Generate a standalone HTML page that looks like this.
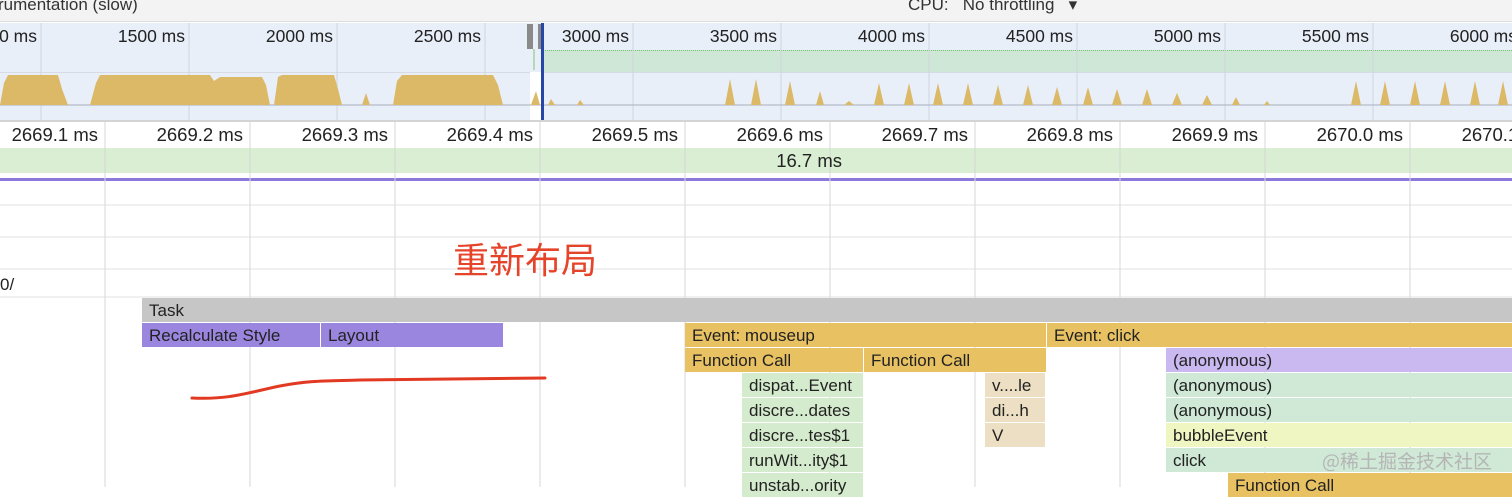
<!DOCTYPE html>
<html><head><meta charset="utf-8"><style>
*{margin:0;padding:0;box-sizing:border-box}
body{width:1512px;height:487px;overflow:hidden;background:#fff;font-family:"Liberation Sans","Noto Sans CJK SC",sans-serif;position:relative;color:#222}
.a{position:absolute}
.lbl{font-size:16px;color:#222;white-space:nowrap}
.bar{position:absolute;height:24px;font-size:17px;line-height:26px;padding-left:7px;white-space:nowrap;overflow:hidden;color:#222}
</style></head><body>
<div class="a" style="left:0;top:0;width:1512px;height:22px;background:#f3f3f3;border-bottom:1px solid #ddd"></div>
<div class="a lbl" style="left:-2px;top:-5px;color:#333;font-size:17px">rumentation (slow)</div>
<div class="a lbl" style="left:908px;top:-5px;color:#333;font-size:17px">CPU: &nbsp;&nbsp;No throttling &nbsp;&nbsp;▾</div>
<div class="a" style="left:0;top:23px;width:1512px;height:97px;background:#e9eff9"></div>
<div class="a" style="left:543px;top:50px;width:969px;height:22px;background:#cfe7d6;border-top:1px dotted #6cbf6c"></div>
<div class="a" style="left:0;top:72px;width:1512px;height:1px;background:#d6dbe4"></div>
<div class="a" style="left:530px;top:72px;width:13px;height:48px;background:#fff"></div>
<svg class="a" style="left:0;top:23px" width="1512" height="97">
<g stroke="#d0d6e0" stroke-width="1">
<line x1="41" y1="0" x2="41" y2="97"/><line x1="189" y1="0" x2="189" y2="97"/><line x1="337" y1="0" x2="337" y2="97"/><line x1="485" y1="0" x2="485" y2="97"/><line x1="633" y1="0" x2="633" y2="97"/><line x1="781" y1="0" x2="781" y2="97"/><line x1="929" y1="0" x2="929" y2="97"/><line x1="1077" y1="0" x2="1077" y2="97"/><line x1="1225" y1="0" x2="1225" y2="97"/><line x1="1373" y1="0" x2="1373" y2="97"/></g>
<line x1="0" y1="82" x2="1512" y2="82" stroke="#a9afbb"/>
<g fill="#dbb967">
<path d="M0 82 L4 60 L8 52 L58 52 L62 66 L68 82Z"/>
<path d="M90 82 L96 60 L100 52 L210 52 L214 58 L220 54 L262 54 L266 62 L270 82Z"/>
<path d="M274 82 L278 54 L282 52 L334 52 L338 66 L342 82Z"/>
<path d="M362 82 L366 70 L370 82Z"/>
<path d="M393 82 L397 58 L402 52 L493 52 L498 62 L503 82Z"/>
<path d="M531 82 L536 68 L540 82Z"/>
<path d="M548 82 L551 76 L555 82Z M577 82 L580 77 L584 82Z"/>
</g>
<g fill="#dbb967">
<path d="M725 82 L730 56 L735 82Z M751 82 L756 56 L761 82Z M785 82 L790 58 L795 82Z M816 82 L820 68 L824 82Z M844 82 L849 78 L854 82Z M874 82 L879 60 L884 82Z M904 82 L909 60 L914 82Z M933 82 L938 60 L943 82Z M963 82 L968 60 L973 82Z M993 82 L998 62 L1003 82Z M1023 82 L1028 62 L1033 82Z M1052 82 L1057 64 L1062 82Z M1083 82 L1088 64 L1093 82Z M1112 82 L1117 66 L1122 82Z M1142 82 L1147 66 L1152 82Z M1172 82 L1177 70 L1182 82Z M1202 82 L1207 72 L1212 82Z M1232 82 L1236 74 L1240 82Z M1264 82 L1267 78 L1270 82Z M1351 82 L1356 58 L1361 82Z M1380 82 L1385 58 L1390 82Z M1410 82 L1415 58 L1420 82Z M1440 82 L1445 58 L1450 82Z M1470 82 L1475 58 L1480 82Z M1498 82 L1503 58 L1508 82Z"/>
</g>
<rect x="527" y="1" width="6" height="25" fill="#8a8a8a"/><rect x="538" y="1" width="3" height="25" fill="#8a8a8a"/>
<line x1="534" y1="26" x2="534" y2="47" stroke="#7cc47c"/>
<rect x="541" y="0" width="3" height="97" fill="#2646a8"/>
<g font-size="17.5" fill="#222" text-anchor="end" font-family="Liberation Sans,sans-serif">
<text x="37" y="19">0 ms</text><text x="185" y="19">1500 ms</text><text x="333" y="19">2000 ms</text><text x="481" y="19">2500 ms</text><text x="629" y="19">3000 ms</text><text x="777" y="19">3500 ms</text><text x="925" y="19">4000 ms</text><text x="1073" y="19">4500 ms</text><text x="1221" y="19">5000 ms</text><text x="1369" y="19">5500 ms</text><text x="1517" y="19">6000 ms</text></g>
</svg>
<div class="a" style="left:0;top:120px;width:1512px;height:2px;background:#d4d4d4"></div>
<svg class="a" style="left:0;top:122px" width="1512" height="365">
<rect x="0" y="26" width="1512" height="25" fill="#d9eed2"/>
<rect x="0" y="56" width="1512" height="3" fill="#8c79dc"/>
<g stroke="#e2e2e2"><line x1="0" y1="83" x2="1512" y2="83"/><line x1="0" y1="115" x2="1512" y2="115"/><line x1="0" y1="147" x2="1512" y2="147"/><line x1="0" y1="175" x2="1512" y2="175"/></g>
<g stroke="#d7d7d7"><line x1="105" y1="0" x2="105" y2="365"/><line x1="250" y1="0" x2="250" y2="365"/><line x1="395" y1="0" x2="395" y2="365"/><line x1="540" y1="0" x2="540" y2="365"/><line x1="685" y1="0" x2="685" y2="365"/><line x1="830" y1="0" x2="830" y2="365"/><line x1="975" y1="0" x2="975" y2="365"/><line x1="1120" y1="0" x2="1120" y2="365"/><line x1="1265" y1="0" x2="1265" y2="365"/><line x1="1410" y1="0" x2="1410" y2="365"/></g>
<g font-size="18.5" fill="#222" text-anchor="end" font-family="Liberation Sans,sans-serif">
<text x="98" y="19">2669.1 ms</text><text x="243" y="19">2669.2 ms</text><text x="388" y="19">2669.3 ms</text><text x="533" y="19">2669.4 ms</text><text x="678" y="19">2669.5 ms</text><text x="823" y="19">2669.6 ms</text><text x="968" y="19">2669.7 ms</text><text x="1113" y="19">2669.8 ms</text><text x="1258" y="19">2669.9 ms</text><text x="1403" y="19">2670.0 ms</text><text x="1548" y="19">2670.1 ms</text>
<text x="842" y="45">16.7 ms</text><text x="0" y="168" text-anchor="start" font-size="17">0/</text></g>
</svg>
<div class="a" style="left:453px;top:232px;font-size:36px;color:#e5432a;font-family:'Noto Sans CJK SC',sans-serif">重新布局</div>
<div class="bar" style="left:142px;top:298px;width:1370px;background:#c6c6c6">Task</div>
<div class="bar" style="left:142px;top:323px;width:178px;background:#9a86df">Recalculate Style</div>
<div class="bar" style="left:321px;top:323px;width:182px;background:#9a86df">Layout</div>
<div class="bar" style="left:685px;top:323px;width:361px;background:#e8c162">Event: mouseup</div>
<div class="bar" style="left:1047px;top:323px;width:465px;background:#e8c162">Event: click</div>
<div class="bar" style="left:685px;top:348px;width:178px;background:#e8c162">Function Call</div>
<div class="bar" style="left:864px;top:348px;width:182px;background:#e8c162">Function Call</div>
<div class="bar" style="left:1166px;top:348px;width:346px;background:#c9b9f0">(anonymous)</div>
<div class="bar" style="left:742px;top:373px;width:121px;background:#d5ebcd">dispat...Event</div>
<div class="bar" style="left:742px;top:398px;width:121px;background:#d5ebcd">discre...dates</div>
<div class="bar" style="left:742px;top:423px;width:121px;background:#d5ebcd">discre...tes$1</div>
<div class="bar" style="left:742px;top:448px;width:121px;background:#d5ebcd">runWit...ity$1</div>
<div class="bar" style="left:742px;top:473px;width:121px;background:#d5ebcd">unstab...ority</div>
<div class="bar" style="left:985px;top:373px;width:60px;background:#ecdfc3">v....le</div>
<div class="bar" style="left:985px;top:398px;width:60px;background:#ecdfc3">di...h</div>
<div class="bar" style="left:985px;top:423px;width:60px;background:#ecdfc3">V</div>
<div class="bar" style="left:1166px;top:373px;width:346px;background:#cfe9d6">(anonymous)</div>
<div class="bar" style="left:1166px;top:398px;width:346px;background:#cfe9d6">(anonymous)</div>
<div class="bar" style="left:1166px;top:423px;width:346px;background:#f0f6c2">bubbleEvent</div>
<div class="bar" style="left:1166px;top:448px;width:346px;background:#cfe9d6">click</div>
<div class="bar" style="left:1228px;top:473px;width:284px;background:#e8c162">Function Call</div>
<div class="a" style="left:1322px;top:447px;font-size:19px;color:#b5b5b5;font-family:'Noto Sans CJK SC',sans-serif">@稀土掘金技术社区</div>
<svg class="a" style="left:0;top:0" width="1512" height="487"><path d="M192 398 C230 400 250 392 280 386 C310 380 330 381 360 380 C430 379 490 379 545 378" stroke="#e23a22" stroke-width="3" fill="none" stroke-linecap="round"/></svg>
</body></html>
